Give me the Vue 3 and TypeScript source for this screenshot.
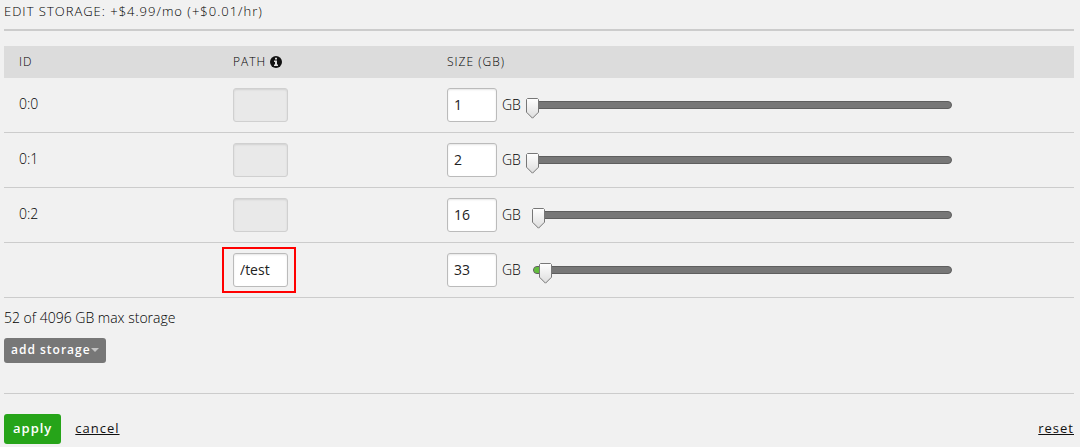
<script setup lang="ts">
import { computed, ref } from 'vue'

interface Volume {
  key: number
  id: string
  path: string
  locked: boolean
  highlighted: boolean
  size: number
}

const MAX_VOLUME_GB = 1024
const MAX_TOTAL_GB = 4096

const initial: Volume[] = [
  { key: 0, id: '0:0', path: '', locked: true, highlighted: false, size: 1 },
  { key: 1, id: '0:1', path: '', locked: true, highlighted: false, size: 2 },
  { key: 2, id: '0:2', path: '', locked: true, highlighted: false, size: 16 },
  { key: 3, id: '', path: '/test', locked: false, highlighted: true, size: 33 },
]

const copy = (): Volume[] => initial.map((v) => ({ ...v }))
const volumes = ref<Volume[]>(copy())
const total = computed(() => volumes.value.reduce((sum, v) => sum + Number(v.size), 0))

function fill(size: number): string {
  return `${((size - 1) / (MAX_VOLUME_GB - 1)) * 100}%`
}

function addVolume(): void {
  volumes.value.push({ key: Date.now(), id: '', path: '', locked: false, highlighted: false, size: 1 })
}

function reset(): void {
  volumes.value = copy()
}
</script>

<template>
  <form class="editor" @submit.prevent>
    <h1 class="title">EDIT STORAGE: +$4.99/mo (+$0.01/hr)</h1>

    <table class="volumes">
      <thead>
        <tr>
          <th class="narrow" scope="col">ID</th>
          <th class="narrow" scope="col">
            <span class="heading">
              PATH
              <svg class="info" viewBox="0 0 12 12" aria-hidden="true">
                <circle cx="6" cy="6" r="6" fill="#111" />
                <path d="M5 1.7h2v1.7H5zM4 4.5h3v4h1V10H4V8.5h1V6H4z" fill="#ddd" />
              </svg>
            </span>
          </th>
          <th scope="col">SIZE (GB)</th>
        </tr>
      </thead>
      <tbody>
        <tr v-for="v in volumes" :key="v.key">
          <td>{{ v.id }}</td>
          <td>
            <span class="path" :class="{ highlighted: v.highlighted }">
              <input v-model="v.path" class="field path-field" type="text" :disabled="v.locked" aria-label="Path" />
            </span>
          </td>
          <td>
            <div class="size">
              <input :id="`size-${v.key}`" v-model.number="v.size" class="field size-field" type="text" />
              <label :for="`size-${v.key}`">GB</label>
              <div class="slider">
                <div class="rail"><div class="fill" :style="{ width: fill(v.size) }"></div></div>
                <input
                  v-model.number="v.size"
                  class="range"
                  type="range"
                  min="1"
                  :max="MAX_VOLUME_GB"
                  aria-label="Size in GB"
                />
              </div>
            </div>
          </td>
        </tr>
      </tbody>
    </table>

    <p class="summary">{{ total }} of {{ MAX_TOTAL_GB }} GB max storage</p>
    <button class="add" type="button" @click="addVolume">
      add storage
      <svg class="caret" viewBox="0 0 8 4" aria-hidden="true"><path d="M0 0h8L4 4z" fill="#c4c4c4" /></svg>
    </button>

    <footer class="actions">
      <button class="apply" type="submit">apply</button>
      <a class="link" href="#">cancel</a>
      <a class="link reset" href="#" @click.prevent="reset">reset</a>
    </footer>
  </form>
</template>

<style>
body {
  background: #f1f1f1;
}
</style>

<style scoped>
.editor {
  padding: 0 6px 0 4px;
  color: #000;
  font: 300 14px/20px "Open Sans", "Noto Sans", sans-serif;
}

.title {
  margin: 0 0 15px;
  padding: 1px 0 8px;
  border-bottom: 2px solid #ccc;
  font-size: 13px;
  font-weight: 300;
  line-height: 20px;
  letter-spacing: 1px;
}

.volumes {
  width: 100%;
  border-collapse: separate;
  border-spacing: 0;
  table-layout: fixed;
}

th {
  height: 32px;
  padding: 0 15px;
  background: #dcdcdc;
  font-size: 12px;
  font-weight: 300;
  line-height: 20px;
  letter-spacing: 1px;
  text-align: left;
}

.narrow {
  width: 20%;
  box-sizing: border-box;
}

.heading {
  display: flex;
  align-items: center;
  gap: 4px;
}

.info {
  width: 12px;
  height: 12px;
}

td {
  height: 34px;
  padding: 10px 15px;
  border-bottom: 1px solid #ccc;
}

td:last-child {
  padding-right: 115px;
}

td:first-child {
  padding-bottom: 12px;
  height: 32px;
}

.path {
  display: block;
  position: relative;
  width: 55px;
}

.highlighted::after {
  content: "";
  position: absolute;
  inset: -6px -8px -6px -11px;
  border: 2px solid #f00;
  pointer-events: none;
}

.field {
  display: block;
  box-sizing: border-box;
  height: 34px;
  margin: 0;
  padding: 0 6px 2px;
  border: 1px solid #bbb;
  border-radius: 3px;
  background: #fff;
  box-shadow: inset 0 1px 2px rgba(0, 0, 0, 0.1);
  color: #222;
  font: 400 14px/20px "Open Sans", "Noto Sans", sans-serif;
}

.field:disabled {
  border-color: #d0d0d0;
  background: #e9e9e9;
}

.path-field {
  width: 55px;
}

.size-field {
  width: 50px;
}

.size {
  display: flex;
  align-items: center;
}

.size label {
  width: 24px;
  margin-left: 5px;
}

.slider {
  display: grid;
  flex: 1;
  align-items: center;
}

.rail,
.range {
  grid-area: 1 / 1;
}

.rail {
  height: 8px;
  box-sizing: border-box;
  margin: 0 7px;
  border: 1px solid #5e5e5e;
  border-radius: 4px;
  background: #777;
  overflow: hidden;
}

.fill {
  height: 100%;
  background: #62bd3d;
}

.range {
  width: 100%;
  height: 34px;
  margin: 0;
  appearance: none;
  background: transparent;
}

.range::-webkit-slider-runnable-track {
  height: 34px;
}

.range::-webkit-slider-thumb {
  appearance: none;
  width: 13px;
  height: 21px;
  margin-top: 10px;
  border: 0;
  background: url("data:image/svg+xml,%3Csvg xmlns='http://www.w3.org/2000/svg' viewBox='0 0 13 21'%3E%3Cdefs%3E%3ClinearGradient id='g' x2='0' y2='1'%3E%3Cstop stop-color='%23fff'/%3E%3Cstop offset='1' stop-color='%23ddd'/%3E%3C/linearGradient%3E%3C/defs%3E%3Cpath d='M1.5.5h10l1 1v12.7l-6 6-6-6V1.5z' fill='url(%23g)' stroke='%23777'/%3E%3C/svg%3E") no-repeat;
}

.summary {
  margin: 10px 0;
}

button {
  border: 0;
  border-radius: 3px;
  color: #fff;
  font-family: "Open Sans", "Noto Sans", sans-serif;
  font-weight: 600;
  letter-spacing: 1px;
  cursor: pointer;
}

.add {
  display: flex;
  align-items: center;
  height: 25px;
  padding: 0 7px 2px;
  background: #777;
  font-size: 12px;
}

.caret {
  width: 8px;
  height: 4px;
}

.actions {
  display: flex;
  align-items: center;
  margin-top: 30px;
  padding-top: 20px;
  border-top: 1px solid #ccc;
}

.apply {
  height: 30px;
  padding: 0 9px 2px;
  background: #26a419;
  font-size: 13px;
}

.link {
  margin-left: 14px;
  padding-bottom: 2px;
  color: #111;
  font-size: 13px;
  font-weight: 400;
  letter-spacing: 1px;
}

.reset {
  margin-left: auto;
}
</style>
